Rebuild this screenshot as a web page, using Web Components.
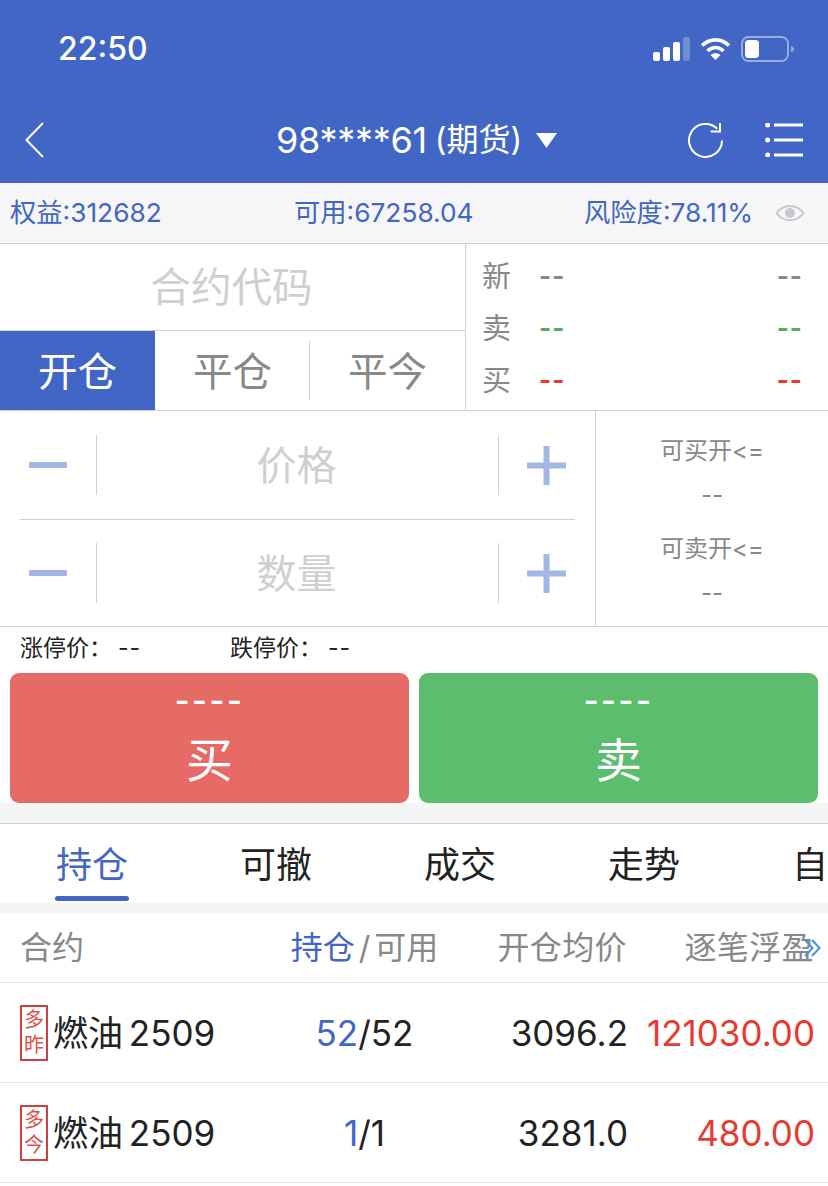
<!DOCTYPE html>
<html lang="zh">
<head>
<meta charset="utf-8">
<title>交易</title>
<style>
  html, body { margin: 0; padding: 0; background: #fff; }
  body { width: 828px; height: 1186px; overflow: hidden; font-family: Inter, "Noto Sans CJK SC", sans-serif; color: #222; }
</style>
</head>
<body>
<trade-page></trade-page>

<script>
// each element: markup + styles in an open shadow root
class Base extends HTMLElement {
  connectedCallback() {
    if (!this.shadowRoot) {
      const root = this.attachShadow({ mode: 'open' });
      root.innerHTML = this.render();
    }
  }
}

class StatusBar extends Base {
  render() {
    return `
<style>
  :host { display: flex; align-items: center; justify-content: space-between; box-sizing: border-box; height: 97px; padding: 0 33px 0 58px; color: #fff; }
  .time { font-size: 32px; font-weight: 500; line-height: 1; }
  .icons { display: flex; align-items: center; gap: 10px; }
  svg { display: block; }
</style>
<span class="time">22:50</span>
<div class="icons">
  <svg width="37" height="24" viewBox="0 0 37 24" fill="#fff">
    <rect x="0" y="15" width="7" height="9" rx="2"/>
    <rect x="10" y="10" width="7" height="14" rx="2"/>
    <rect x="20" y="5" width="7" height="19" rx="2"/>
    <rect x="30" y="0" width="7" height="24" rx="2" opacity=".25"/>
  </svg>
  <svg width="31" height="24" viewBox="0 0 31 24" fill="none" stroke="#fff" stroke-width="3.6">
    <path d="M2 8.5C10 1 21 1 29 8.5"/>
    <path d="M7.5 14C12.5 9.5 18.5 9.5 23.5 14"/>
    <path d="M15.5 23L10.5 18C13.5 15.5 17.500 15.500 20.500 18Z" fill="#fff" stroke="none"/>
  </svg>
  <svg width="54" height="26" viewBox="0 0 54 26">
    <rect x="1" y="1" width="46" height="24" rx="6.500" fill="none" stroke="#fff" stroke-opacity=".45" stroke-width="2"/>
    <rect x="4" y="4" width="14" height="18" rx="3.500" fill="#fff"/>
    <path d="M50 10C52 10.500 53 11.500 53 13S52 15.500 50 16Z" fill="#fff" fill-opacity=".45"/>
  </svg>
</div>`;
  }
}

class NavBar extends Base {
  render() {
    return `
<style>
  :host { display: flex; align-items: center; box-sizing: border-box; height: 86px; padding: 0 25px; color: #fff; }
  svg { display: block; flex: none; }
  .title { flex: 1; display: flex; align-items: center; padding-left: 232px; white-space: nowrap; }
  .acct { font-size: 36px; line-height: 1; letter-spacing: -.3px; }
  .kind { font-size: 32px; line-height: 1; margin-left: 8px; }
  .caret { margin-left: 14px; }
  .actions { display: flex; align-items: center; gap: 42px; }
</style>
<svg width="19" height="36" viewBox="0 0 19 36" fill="none" stroke="#fff" stroke-width="2">
  <path d="M18 1L1.500 18L18 35"/>
</svg>
<div class="title">
  <span class="acct">98****61</span><span class="kind">(期货)</span>
  <svg class="caret" width="21" height="15" viewBox="0 0 21 15"><path d="M0 0H21L10.500 15Z" fill="#fff"/></svg>
</div>
<div class="actions">
  <svg width="35" height="35" viewBox="0 0 35 35" fill="none" stroke="#fff" stroke-width="2">
    <path d="M29.200 5.800A16.500 16.500 0 1 0 34 17.500"/>
    <path d="M22.700 8.500H32V0"/>
  </svg>
  <svg width="38" height="34" viewBox="0 0 38 34" fill="#fff">
    <circle cx="2.600" cy="2" r="2.500"/><circle cx="2.600" cy="17" r="2.500"/><circle cx="2.600" cy="32" r="2.500"/>
    <rect x="9" y=".500" width="29" height="3"/><rect x="9" y="15.500" width="29" height="3"/><rect x="9" y="30.500" width="29" height="3"/>
  </svg>
</div>`;
  }
}

class AccountBar extends Base {
  render() {
    return `
<style>
  :host { display: grid; grid-template-columns: 284px 290px 192px 1fr; align-items: center; box-sizing: border-box; height: 61px; padding: 0 0 6px 10px; background: #f6f6f9; border-bottom: 1px solid #cfcfd6; color: #4166c5; font-size: 26.300px; white-space: nowrap; }
  svg { display: block; margin-top: 5px; margin-left: -1px; }
</style>
<span>权益:312682</span>
<span>可用:67258.04</span>
<span>风险度:78.11%</span>
<svg width="30" height="22" viewBox="0 0 30 22" fill="none" stroke="#c8c8ce" stroke-width="2">
  <path d="M1.500 11C8 1.500 22 1.500 28.500 11C22 20.500 8 20.500 1.500 11Z"/>
  <circle cx="15" cy="11" r="5" fill="#c8c8ce" stroke="none"/>
</svg>`;
  }
}

class OpenTabs extends Base {
  render() {
    return `
<style>
  :host { display: flex; flex: 1; box-sizing: border-box; border-top: 1px solid #cfcfd6; color: #888; font-size: 39.5px; }
  div { flex: 1; display: flex; align-items: center; justify-content: center; position: relative; padding-bottom: 4px; }
  .on { background: #4166c5; color: #fff; }
  .rule::after { content: ""; position: absolute; right: 0; top: 10px; bottom: 10px; width: 1px; background: #cfcfd6; }
</style>
<div class="on">开仓</div>
<div class="rule">平仓</div>
<div>平今</div>`;
  }
}

class QuotePanel extends Base {
  render() {
    return `
<style>
  :host { display: flex; flex-direction: column; justify-content: center; flex: 1; box-sizing: border-box; padding: 0 25px 3px 16px; }
  .row { display: grid; grid-template-columns: 57px 1fr auto; align-items: center; height: 52px; color: #888; font-size: 29px; }
  .dash { font-size: 26px; font-weight: 700; letter-spacing: 1px; margin-top: 4px; }
  .g { color: #58ab5c; }
  .r { color: #e63b30; }
</style>
<div class="row"><span>新</span><span class="dash">--</span><span class="dash">--</span></div>
<div class="row"><span>卖</span><span class="dash g">--</span><span class="dash g">--</span></div>
<div class="row"><span>买</span><span class="dash r">--</span><span class="dash r">--</span></div>`;
  }
}

class StepRow extends Base {
  render() {
    return `
<style>
  :host { display: grid; grid-template-columns: 76px 403px 76px; align-items: center; margin: 0 20px; }
  .minus, .plus { display: flex; align-items: center; }
  .minus { padding-left: 9px; }
  .plus { justify-content: flex-end; padding-right: 9px; }
  .label { display: flex; align-items: center; justify-content: center; box-sizing: border-box; height: 60px; padding: 0 2px 4px 0; border-left: 1px solid #cfcfd6; border-right: 1px solid #cfcfd6; color: #cfcfd2; font-size: 40px; }
  svg { display: block; }
</style>
<div class="minus"><svg width="38" height="6" viewBox="0 0 38 6"><rect width="38" height="6" fill="#a4b6e4"/></svg></div>
<div class="label"><slot></slot></div>
<div class="plus"><svg width="39" height="39" viewBox="0 0 39 39" fill="#a4b6e4"><rect y="16.500" width="39" height="6"/><rect x="16.500" width="6" height="39"/></svg></div>`;
  }
}

class LimitRow extends Base {
  render() {
    return `
<style>
  :host { display: grid; grid-template-columns: 210px 1fr; align-items: center; box-sizing: border-box; height: 46px; padding: 0 0 8px 20px; font-size: 23px; color: #222; white-space: nowrap; }
  i { font-style: normal; font-family: Inter, sans-serif; margin-left: 6px; letter-spacing: 1px; }
</style>
<span>涨停价：<i>--</i></span>
<span>跌停价：<i>--</i></span>`;
  }
}

class TradeButton extends Base {
  render() {
    return `
<style>
  :host { display: flex; flex-direction: column; align-items: center; flex: 1; border-radius: 9px; background: var(--bg); color: #fff; }
  .price { font-size: 32px; font-weight: 600; line-height: 30px; margin-top: 13px; letter-spacing: 2.500px; }
  .side { font-size: 47px; line-height: 47px; margin-top: 20px; }
</style>
<span class="price">----</span>
<span class="side"><slot></slot></span>`;
  }
}

class TabStrip extends Base {
  render() {
    return `
<style>
  :host { display: flex; box-sizing: border-box; height: 80px; border-top: 1px solid #cfcfd6; overflow: hidden; font-size: 36px; color: #222; }
  div { flex: 0 0 184px; box-sizing: border-box; display: flex; justify-content: center; align-items: center; height: 79px; padding-bottom: 4px; position: relative; }
  .on { color: #4166c5; }
  .on::after { content: ""; position: absolute; left: 55px; bottom: 2px; width: 74px; height: 5px; border-radius: 3px; background: #4166c5; }
</style>
<div class="on">持仓</div>
<div>可撤</div>
<div>成交</div>
<div>走势</div>
<div>自选</div>`;
  }
}

class PositionHead extends Base {
  render() {
    return `
<style>
  :host { display: grid; grid-template-columns: 230px 229px 148px 187px; align-items: center; box-sizing: border-box; height: 70px; padding: 0 0 6px 20px; position: relative; border-bottom: 1px solid #e4e4ea; color: #888; font-size: 32px; white-space: nowrap; }
  .mid { text-align: center; }
  .end { text-align: right; letter-spacing: .4px; }
  b { font-weight: 400; color: #4166c5; margin-right: 4px; }
  .s { margin-right: 4px; }
  .more { position: absolute; right: 6px; top: 25px; display: block; }
</style>
<span>合约</span>
<span class="mid"><b>持仓</b><span class="s">/</span>可用</span>
<span class="end">开仓均价</span>
<span class="end">逐笔浮盈</span>
<svg class="more" width="18" height="20" viewBox="0 0 18 20" fill="none" stroke="#4a90e2" stroke-width="2">
  <path d="M1 2L8.500 10L1 18"/><path d="M8 2L15.500 10L8 18"/>
</svg>`;
  }
}

class PositionRow extends Base {
  render() {
    const a = (n) => this.getAttribute(n) || '';
    return `
<style>
  :host { display: grid; grid-template-columns: 230px 229px 149px 187px; align-items: center; box-sizing: border-box; height: 100px; padding-left: 20px; border-bottom: 1px solid #e4e4ea; font-size: 35px; color: #222; white-space: nowrap; }
  .name { display: flex; align-items: center; gap: 5px; }
  .label { word-spacing: -4px; margin-bottom: 4px; }
  .tag { box-sizing: border-box; display: flex; flex-direction: column; align-items: center; justify-content: center; width: 28px; height: 56px; border: 2px solid #cf3f3b; color: #e0504a; font-size: 20px; line-height: 25px; }
  .mid { text-align: center; }
  .end { text-align: right; }
  b { font-weight: 400; color: #4166c5; }
  .red { color: #e63b30; }
</style>
<div class="name"><span class="tag"><span>多</span><span>${a('tag')}</span></span><span class="label">燃油 2509</span></div>
<span class="mid"><b>${a('hold')}</b>/${a('free')}</span>
<span class="end">${a('avg')}</span>
<span class="end red">${a('pnl')}</span>`;
  }
}

class TradePage extends Base {
  render() {
    return `
<style>
  :host { display: block; width: 828px; height: 1186px; overflow: hidden; background: #fff; }
  header { background: #4166c5; }
  .top { display: flex; box-sizing: border-box; height: 167px; border-bottom: 1px solid #cfcfd6; }
  .left { display: flex; flex-direction: column; width: 466px; box-sizing: border-box; border-right: 1px solid #cfcfd6; }
  .code { display: flex; align-items: center; justify-content: center; height: 86px; padding: 0 2px 5px 0; box-sizing: border-box; font-size: 40.600px; color: #cfcfd2; }
  .entry { display: flex; box-sizing: border-box; height: 216px; border-bottom: 1px solid #cfcfd6; }
  .steps { display: flex; flex-direction: column; width: 595px; }
  .steps hr { flex: none; margin: 0 20px; border: 0; height: 1px; background: #cfcfd6; }
  .steps step-row:first-child { height: 108px; }
  .steps step-row:last-child { height: 106px; }
  .avail { flex: 1; display: flex; flex-direction: column; align-items: center; border-left: 1px solid #cfcfd6; color: #888; font-size: 24px; }
  .avail span { height: 44px; line-height: 44px; }
  .avail .a1 { margin-top: 18px; }
  .avail .a2 { margin-top: 10px; }
  .avail .n { font-family: Inter, sans-serif; }
  .btns { display: flex; gap: 10px; height: 130px; padding: 0 10px; }
  .gap { height: 20px; background: #f5f5f5; }
  .gap.thin { height: 10px; }
</style>
<header>
  <status-bar></status-bar>
  <nav-bar></nav-bar>
</header>
<account-bar></account-bar>
<section class="top">
  <div class="left">
    <div class="code">合约代码</div>
    <open-tabs></open-tabs>
  </div>
  <quote-panel></quote-panel>
</section>
<section class="entry">
  <div class="steps">
    <step-row>价格</step-row>
    <hr>
    <step-row>数量</step-row>
  </div>
  <div class="avail">
    <span class="a1">可买开&lt;=</span>
    <span class="n">--</span>
    <span class="a2">可卖开&lt;=</span>
    <span class="n">--</span>
  </div>
</section>
<limit-row></limit-row>
<div class="btns">
  <trade-button style="--bg:#e66a65">买</trade-button>
  <trade-button style="--bg:#5cbd6e">卖</trade-button>
</div>
<div class="gap"></div>
<tab-strip></tab-strip>
<div class="gap thin"></div>
<position-head></position-head>
<position-row tag="昨" hold="52" free="52" avg="3096.2" pnl="121030.00"></position-row>
<position-row tag="今" hold="1" free="1" avg="3281.0" pnl="480.00"></position-row>`;
  }
}

customElements.define('status-bar', StatusBar);
customElements.define('nav-bar', NavBar);
customElements.define('account-bar', AccountBar);
customElements.define('open-tabs', OpenTabs);
customElements.define('quote-panel', QuotePanel);
customElements.define('step-row', StepRow);
customElements.define('limit-row', LimitRow);
customElements.define('trade-button', TradeButton);
customElements.define('tab-strip', TabStrip);
customElements.define('position-head', PositionHead);
customElements.define('position-row', PositionRow);
customElements.define('trade-page', TradePage);
</script>
</body>
</html>
